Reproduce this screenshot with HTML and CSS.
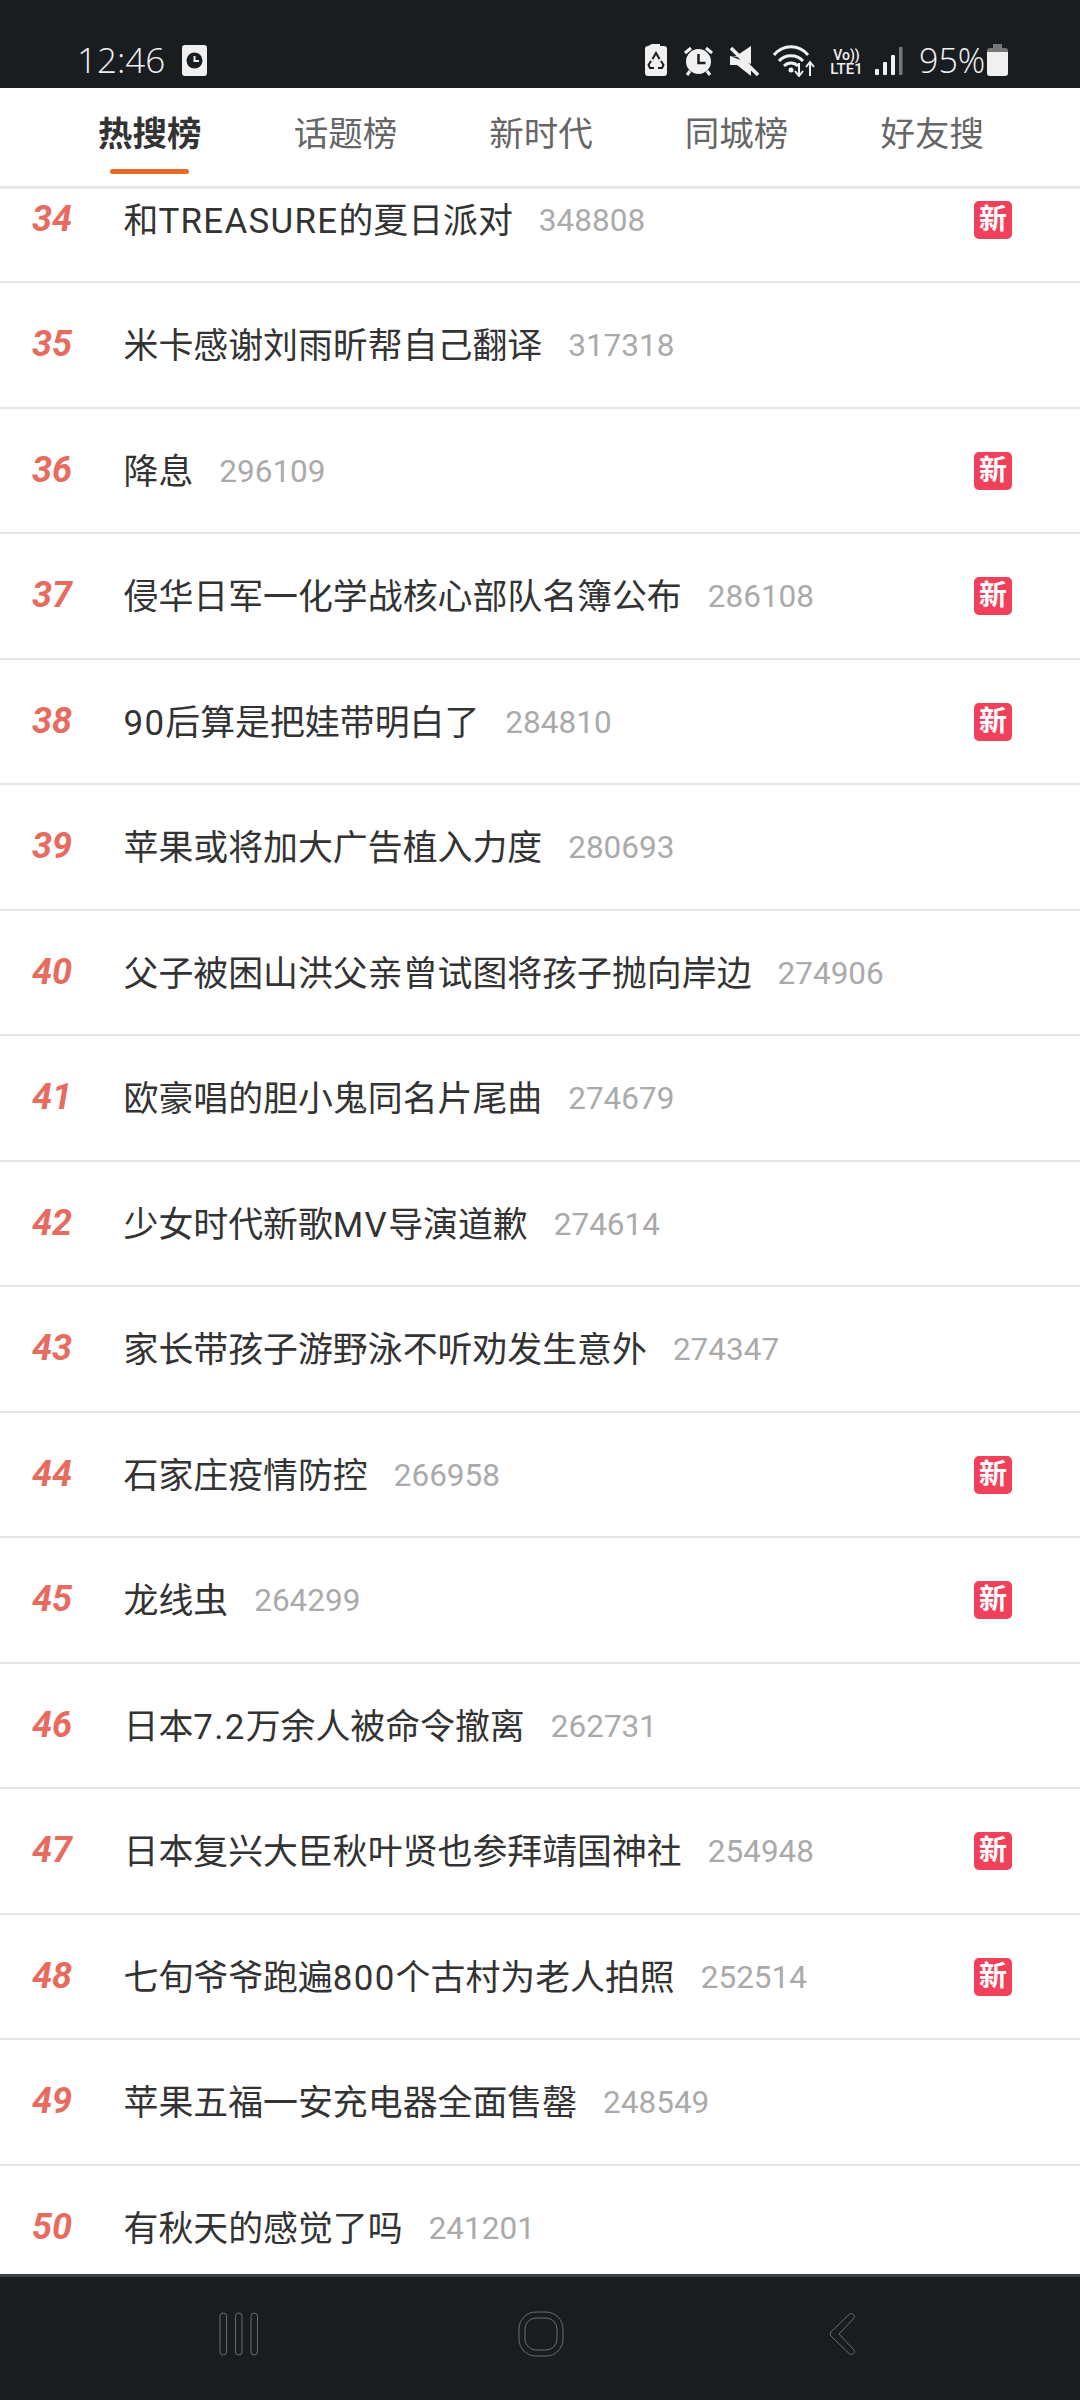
FILE: index.html
```html
<!DOCTYPE html>
<html lang="zh">
<head>
<meta charset="utf-8">
<title>热搜榜</title>
<link rel="stylesheet" href="styles.css">
</head>
<body>
<div class="phone">
  <div class="status">
    <div class="status-left">
      <span class="time">12:46</span>
      <svg class="ic-clock" width="25" height="31" viewBox="0 0 25 31"><rect width="25" height="31" rx="3" fill="#f0f0f0"/><circle cx="12.5" cy="15.5" r="8" fill="#1a1d20"/><path d="M12.5 11v5h4.500" fill="none" stroke="#f0f0f0" stroke-width="2"/></svg>
    </div>
    <div class="status-right">
      <svg width="22" height="32" viewBox="0 0 22 32"><path d="M7 0h8v2h4a3 3 0 0 1 3 3v24a3 3 0 0 1-3 3H3a3 3 0 0 1-3-3V5a3 3 0 0 1 3-3z" fill="#f0f0f0"/><path d="M7.500 15l3.500-6 3.500 6M16 17l2.500 4-1.500 3h-4M6 17l-2.500 4 1.500 3h4" fill="none" stroke="#1a1d20" stroke-width="2"/></svg>
      <svg class="ic-alarm" width="29" height="30" viewBox="0 0 29 30"><circle cx="14.500" cy="15.500" r="12.500" fill="#f0f0f0"/><path d="M14.500 8v9h7" fill="none" stroke="#1a1d20" stroke-width="2.500"/><path d="M1 7l6-5M28 7l-6-5M6 25l-3 4M23 25l3 4" stroke="#f0f0f0" stroke-width="3" fill="none"/></svg>
      <svg class="ic-mute" width="30" height="30" viewBox="0 0 30 30"><path d="M0 10h6l15-10v18z M0 10v9h7l14 11v-7L9 11z" fill="#f0f0f0"/><path d="M1 2l27 27" stroke="#f0f0f0" stroke-width="3.500"/></svg>
      <svg class="ic-wifi" width="42" height="32" viewBox="0 0 42 32"><g fill="none" stroke="#f0f0f0" stroke-width="3"><path d="M1 10C10 -1 26 -1 35 10"/><path d="M6 16c6-7 18-7 24 0"/><path d="M11 21c4-4 10-4 14 0"/></g><circle cx="18" cy="25" r="2.500" fill="#f0f0f0"/><path d="M26 18v12M22 26l4 5 4-5M37 31V17M33 22l4-5 4 5" fill="none" stroke="#f0f0f0" stroke-width="2"/></svg>
      <div class="volte"><span class="vo">Vo))</span><span class="lte">LTE1</span></div>
      <svg class="ic-signal" width="28" height="30" viewBox="0 0 28 30"><rect x="0" y="23" width="4" height="6" rx="1" fill="#f0f0f0"/><rect x="8" y="16" width="4" height="13" rx="1" fill="#f0f0f0"/><rect x="16" y="9" width="4" height="20" rx="1" fill="#f0f0f0"/><rect x="24" y="1" width="3.500" height="28" fill="#777"/></svg>
      <span class="pct">95%</span>
      <svg class="ic-batt" width="21" height="32" viewBox="0 0 21 32"><path d="M6 0h9v4H6z" fill="#777"/><path d="M3 4h15a3 3 0 0 1 3 3v1H0V7a3 3 0 0 1 3-3z" fill="#777"/><path d="M0 8h21v21a3 3 0 0 1-3 3H3a3 3 0 0 1-3-3z" fill="#f0f0f0"/></svg>
    </div>
  </div>

  <nav class="tabs">
    <div class="tab active"><span class="tab-label">热搜榜</span><i class="tab-bar"></i></div>
    <div class="tab"><span class="tab-label">话题榜</span></div>
    <div class="tab"><span class="tab-label">新时代</span></div>
    <div class="tab"><span class="tab-label">同城榜</span></div>
    <div class="tab"><span class="tab-label">好友搜</span></div>
  </nav>

  <div class="viewport">
    <ul class="list">
      <li class="row"><span class="rank">34</span><span class="title">和<span class="wide">TREASURE</span>的夏日派对</span><span class="count">348808</span><span class="badge">新</span></li>
      <li class="row"><span class="rank">35</span><span class="title">米卡感谢刘雨昕帮自己翻译</span><span class="count">317318</span></li>
      <li class="row"><span class="rank">36</span><span class="title">降息</span><span class="count">296109</span><span class="badge">新</span></li>
      <li class="row"><span class="rank">37</span><span class="title">侵华日军一化学战核心部队名簿公布</span><span class="count">286108</span><span class="badge">新</span></li>
      <li class="row"><span class="rank">38</span><span class="title"><span class="wide">90</span>后算是把娃带明白了</span><span class="count">284810</span><span class="badge">新</span></li>
      <li class="row"><span class="rank">39</span><span class="title">苹果或将加大广告植入力度</span><span class="count">280693</span></li>
      <li class="row"><span class="rank">40</span><span class="title">父子被困山洪父亲曾试图将孩子抛向岸边</span><span class="count">274906</span></li>
      <li class="row"><span class="rank">41</span><span class="title">欧豪唱的胆小鬼同名片尾曲</span><span class="count">274679</span></li>
      <li class="row"><span class="rank">42</span><span class="title">少女时代新歌<span class="wide">MV</span>导演道歉</span><span class="count">274614</span></li>
      <li class="row"><span class="rank">43</span><span class="title">家长带孩子游野泳不听劝发生意外</span><span class="count">274347</span></li>
      <li class="row"><span class="rank">44</span><span class="title">石家庄疫情防控</span><span class="count">266958</span><span class="badge">新</span></li>
      <li class="row"><span class="rank">45</span><span class="title">龙线虫</span><span class="count">264299</span><span class="badge">新</span></li>
      <li class="row"><span class="rank">46</span><span class="title">日本<span class="wide">7.2</span>万余人被命令撤离</span><span class="count">262731</span></li>
      <li class="row"><span class="rank">47</span><span class="title">日本复兴大臣秋叶贤也参拜靖国神社</span><span class="count">254948</span><span class="badge">新</span></li>
      <li class="row"><span class="rank">48</span><span class="title">七旬爷爷跑遍<span class="wide">800</span>个古村为老人拍照</span><span class="count">252514</span><span class="badge">新</span></li>
      <li class="row"><span class="rank">49</span><span class="title">苹果五福一安充电器全面售罄</span><span class="count">248549</span></li>
      <li class="row"><span class="rank">50</span><span class="title">有秋天的感觉了吗</span><span class="count">241201</span></li>
    </ul>
  </div>

  <div class="navbar">
    <svg class="nav-recents" width="40" height="44" viewBox="0 0 40 44"><g fill="none" stroke="#6a6d70" stroke-width="1"><rect x="1" y="1" width="6.500" height="42" rx="3.250"/><rect x="16.500" y="1" width="6.500" height="42" rx="3.250"/><rect x="32" y="1" width="6.500" height="42" rx="3.250"/></g></svg>
    <svg class="nav-home" width="46" height="46" viewBox="0 0 46 46"><g fill="none" stroke="#6a6d70" stroke-width="1"><rect x="1" y="1" width="44" height="44" rx="17"/><rect x="7" y="7" width="32" height="32" rx="11"/></g></svg>
    <svg width="28" height="44" viewBox="0 0 28 44"><path d="M20 2.500c1.500-2 6-.5 5.500 3L10 22l15.500 16.500c.5 3.500-4 5-5.500 3L2 24c-1-1-1-3 0-4z" fill="none" stroke="#6a6d70" stroke-width="1"/></svg>
  </div>
</div>
</body>
</html>
```
FILE: styles.css
```css
* { box-sizing: border-box; }
html, body { margin: 0; padding: 0; }
body { background: #fff; font-family: Roboto, "Noto Sans CJK SC", sans-serif; }
.phone { width: 1080px; height: 2400px; display: flex; flex-direction: column; overflow: hidden; }

.status { height: 88px; flex: none; background: #1a1d20; color: #f0f0f0; display: flex; justify-content: space-between; align-items: flex-start; padding: 44px 72px 0 77px; }
.status-left { display: flex; align-items: center; gap: 23px; }
.time { font-family: "Open Sans", sans-serif; font-weight: 300; font-size: 35px; line-height: 32px; width: 82px; white-space: nowrap; }
.status-right { display: flex; align-items: flex-start; }
.ic-alarm { margin-left: 17px; margin-top: 2px; }
.ic-mute { margin-left: 17px; margin-top: 2px; }
.ic-wifi { margin-left: 13px; margin-top: 1px; }
.volte { margin-left: 12px; width: 39px; display: flex; flex-direction: column; align-items: center; margin-top: 4px; font-family: Roboto, sans-serif; font-weight: 500; }
.vo { font-size: 14px; line-height: 14px; }
.lte { font-size: 15px; line-height: 15px; }
.ic-signal { margin-left: 9px; margin-top: 2px; }
.pct { margin-left: 16px; width: 62px; font-family: "Open Sans", sans-serif; font-weight: 300; font-size: 34px; line-height: 32px; white-space: nowrap; }
.ic-batt { margin-left: 6px; }

.tabs { flex: none; height: 101px; display: flex; padding: 0 50px 0 52px; background: #fff; border-bottom: 3px solid #e6e6e6; }
.tab { width: 195.6px; display: flex; flex-direction: column; align-items: center; padding-top: 24px; }
.tab-label { font-size: 34.5px; line-height: 44px; color: #666; }
.tab.active .tab-label { font-weight: 700; color: #333; }
.tab-bar { display: block; width: 79px; height: 5px; margin-top: 13px; border-radius: 3px; background: #e76c28; }

.viewport { flex: 1; min-height: 0; overflow: hidden; }
.list { list-style: none; margin: -31.5px 0 0; padding: 0; }
.row { height: 125.5px; display: flex; align-items: center; padding-right: 68px; border-bottom: 2px solid #e6e6e6; }
.rank { width: 123.5px; flex: none; padding-left: 32px; margin-top: -1px; font-family: Roboto, sans-serif; font-style: italic; font-weight: 700; font-size: 36px; color: #e76b5e; }
.title { font-size: 34.9px; color: #333; white-space: nowrap; margin-top: -3px; }
.wide { letter-spacing: 1.3px; }
.count { margin-left: 26px; margin-top: 2px; font-size: 31.5px; color: #aaa; }
.badge { margin-left: auto; margin-top: 1px; width: 38px; height: 38px; border-radius: 5px; background: #f0405a; color: #fff; font-size: 28px; font-weight: 700; line-height: 38px; text-align: center; }

.navbar { flex: none; height: 126px; background: #1a1d20; border-top: 3px solid #3c4245; display: flex; align-items: flex-start; padding: 35px 0 0 219px; }
.nav-recents { margin-right: 259px; }
.nav-home { margin-right: 265px; margin-top: -1px; }
```
